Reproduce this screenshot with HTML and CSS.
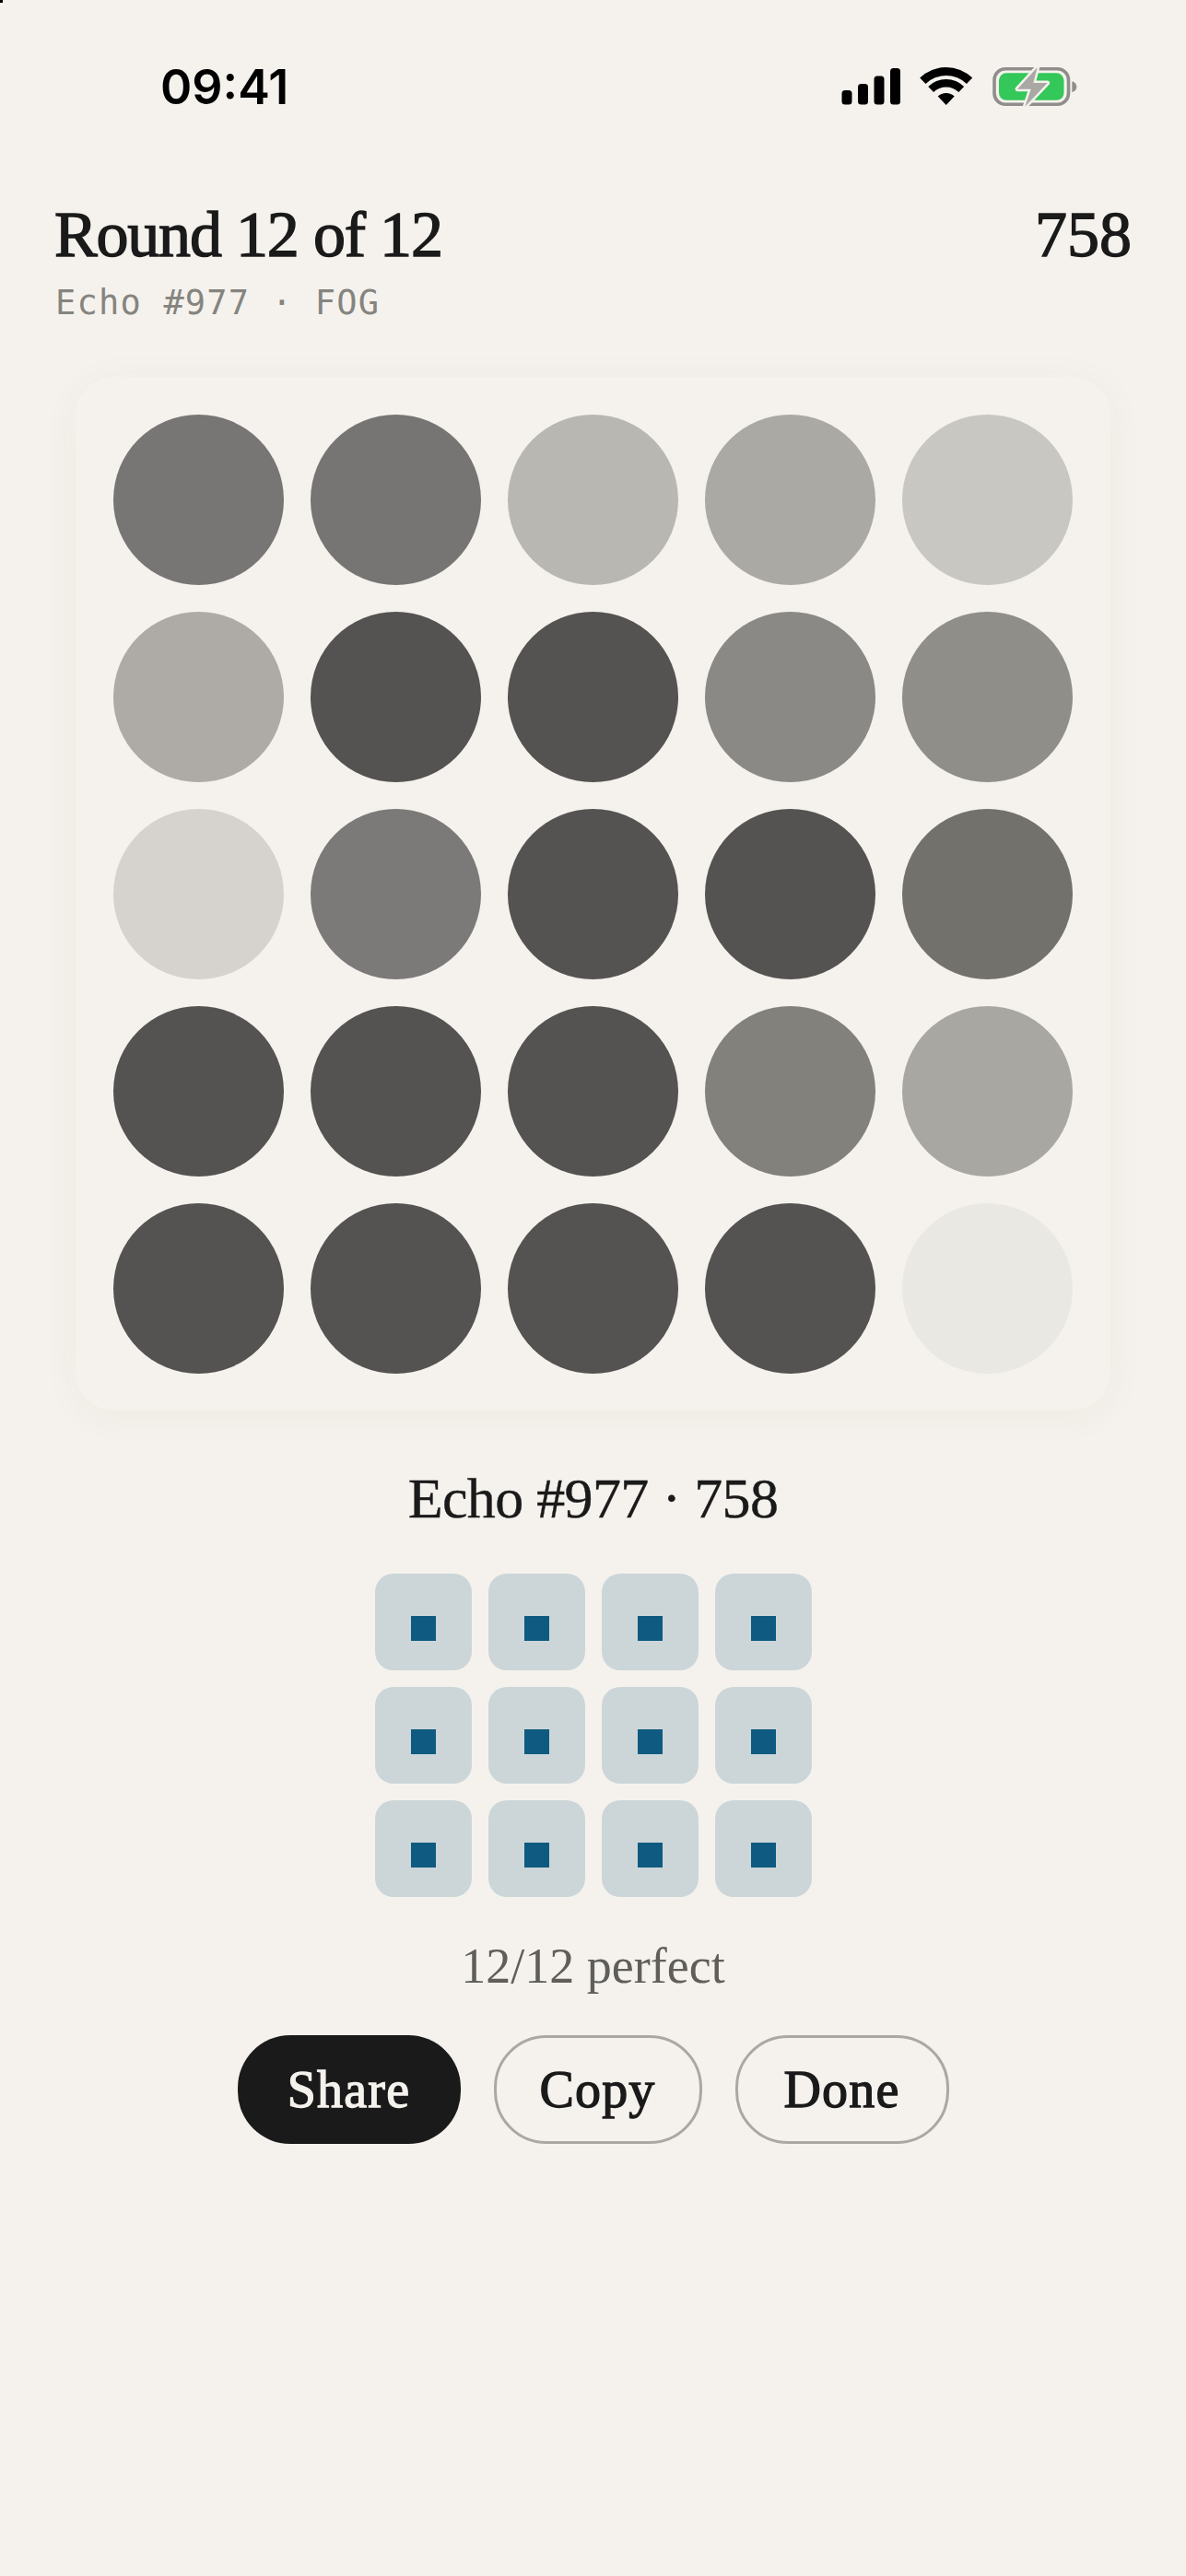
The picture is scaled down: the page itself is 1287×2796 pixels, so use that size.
FILE: index.html
```html
<!DOCTYPE html>
<html lang="en">
<head>
<meta charset="utf-8">
<title>Echo #977</title>
<link rel="stylesheet" href="styles.css">
</head>
<body>
<main class="screen">
  <span class="corner-mark"></span>
  <div class="status">
    <span class="time">09:41</span>
    <svg class="status-icons" viewBox="0 0 255 42" width="255" height="42" aria-hidden="true">
      <rect x="0.500" y="25" width="11" height="15.500" rx="3.500"/>
      <rect x="18" y="18" width="11" height="22.500" rx="3.500"/>
      <rect x="35.500" y="9.500" width="11" height="31" rx="3.500"/>
      <rect x="53" y="1" width="11" height="39.500" rx="3.500"/>
      <path d="M85.200 11.500A41 41 0 0 1 142.200 11.500L135.900 18A32 32 0 0 0 91.500 18Z"/>
      <path d="M94.200 20.900A28 28 0 0 1 133.200 20.900L127.300 27A19.500 19.500 0 0 0 100.100 27Z"/>
      <path d="M113.700 41L104.700 31.600A13 13 0 0 1 122.700 31.600Z"/>
      <rect class="bat-shell" x="166" y="1.800" width="80.500" height="38.500" rx="12"/>
      <rect class="bat-fill" x="171" y="6.300" width="70.500" height="29.500" rx="8"/>
      <path class="bat-nub" d="M250.300 15.300C253.500 16 255.300 18.500 255.300 21.200C255.300 24 253.500 26.300 250.300 27Z"/>
      <path class="bat-bolt" d="M212.700 0L191 23.700H205.700L199.300 42.700L223.700 17H208.300Z"/>
    </svg>
  </div>

  <header class="head">
    <div class="head-row">
      <h1 class="title">Round 12 of 12</h1>
      <span class="score">758</span>
    </div>
    <p class="sub">Echo #977 · FOG</p>
  </header>

  <section class="card">
    <span class="dot c77"></span><span class="dot c76"></span><span class="dot cb8"></span><span class="dot caa"></span><span class="dot cc8"></span>
    <span class="dot cae"></span><span class="dot c54"></span><span class="dot c54"></span><span class="dot c8a"></span><span class="dot c8f"></span>
    <span class="dot cd6"></span><span class="dot c7b"></span><span class="dot c54"></span><span class="dot c54"></span><span class="dot c72"></span>
    <span class="dot c54"></span><span class="dot c54"></span><span class="dot c54"></span><span class="dot c82"></span><span class="dot ca8"></span>
    <span class="dot c54"></span><span class="dot c54"></span><span class="dot c54"></span><span class="dot c54"></span><span class="dot cea"></span>
  </section>

  <h2 class="result">Echo #977 · 758</h2>

  <div class="tiles">
    <div class="tile"><i></i></div><div class="tile"><i></i></div><div class="tile"><i></i></div><div class="tile"><i></i></div>
    <div class="tile"><i></i></div><div class="tile"><i></i></div><div class="tile"><i></i></div><div class="tile"><i></i></div>
    <div class="tile"><i></i></div><div class="tile"><i></i></div><div class="tile"><i></i></div><div class="tile"><i></i></div>
  </div>

  <p class="perfect">12/12 perfect</p>

  <div class="actions">
    <button class="btn btn-dark">Share</button>
    <button class="btn btn-line btn-copy">Copy</button>
    <button class="btn btn-line btn-done">Done</button>
  </div>
</main>
</body>
</html>
```

FILE: styles.css
```css
* { box-sizing: border-box; }
html, body { margin: 0; padding: 0; }
body {
  background: #f5f2ed;
  color: #1a1a1a;
  font-family: "Liberation Serif", serif;
}
.screen { position: relative; width: 1287px; height: 2796px; overflow: hidden; }
.corner-mark { position: absolute; left: 0; top: 0; width: 3px; height: 3px; background: #000; }

.status {
  display: flex;
  justify-content: space-between;
  align-items: flex-start;
  height: 224px;
  padding: 65px 119px 0 174px;
}
.time {
  font-family: Inter, sans-serif;
  font-weight: 600;
  font-size: 52px;
  line-height: 60px;
  color: #000;
}
.status-icons { margin-top: 8px; fill: #000; overflow: visible; }
.bat-shell { fill: none; stroke: #8f8e8c; stroke-width: 3.6; }
.bat-fill { fill: #34c759; }
.bat-nub { fill: #8f8e8c; }
.bat-bolt { fill: #a9a8a5; stroke: #f5f2ed; stroke-width: 5; paint-order: stroke; stroke-linejoin: round; }

.head { padding: 0 59px; }
.head-row { display: flex; justify-content: space-between; align-items: baseline; }
.title, .score {
  margin: 0;
  font-family: "Liberation Serif", serif;
  font-weight: 400;
  font-size: 70px;
  line-height: 62px;
  color: #1a1a1a;
  -webkit-text-stroke: 1.4px #1a1a1a;
}
.title { letter-spacing: -1.2px; }
.sub {
  margin: 21px 0 0 1px;
  font-family: "DejaVu Sans Mono", monospace;
  font-size: 37px;
  line-height: 44px;
  letter-spacing: 1.2px;
  color: #85847f;
  white-space: pre;
}

.card {
  display: grid;
  grid-template-columns: repeat(5, 185px);
  gap: 29px;
  width: 1123px;
  height: 1122px;
  margin: 58px auto 0;
  padding: 41px;
  background: #f5f2ed;
  border-radius: 42px;
  box-shadow: 0 6px 44px rgba(70, 60, 30, 0.045);
}
.dot { width: 185px; height: 185px; border-radius: 50%; }
.c77 { background: #777674; }
.c76 { background: #767573; }
.cb8 { background: #b8b7b2; }
.caa { background: #aaa9a4; }
.cc8 { background: #c8c7c2; }
.cae { background: #aeaba7; }
.c54 { background: #545351; }
.c8a { background: #8a8985; }
.c8f { background: #8f8e89; }
.cd6 { background: #d6d3cf; }
.c7b { background: #7b7a78; }
.c72 { background: #72716c; }
.c82 { background: #82817c; }
.ca8 { background: #a8a7a2; }
.cea { background: #eae8e3; }

.result {
  margin: 59px 0 0;
  text-align: center;
  font-weight: 400;
  font-size: 62px;
  line-height: 72px;
  letter-spacing: -0.67px;
  color: #1a1a1a;
  -webkit-text-stroke: 0.4px #1a1a1a;
}

.tiles {
  display: grid;
  grid-template-columns: repeat(4, 105px);
  grid-auto-rows: 105px;
  gap: 18px;
  justify-content: center;
  margin-top: 46px;
}
.tile {
  display: flex;
  align-items: center;
  justify-content: center;
  padding-top: 14px;
  background: #ccd6d9;
  border-radius: 20px;
}
.tile i { display: block; width: 27px; height: 27px; background: #0f5a80; }

.perfect {
  margin: 45px 0 0;
  text-align: center;
  font-size: 54px;
  line-height: 60px;
  color: #5f5e5b;
}

.actions {
  display: flex;
  justify-content: center;
  gap: 36px;
  margin-top: 45px;
}
.btn {
  height: 118px;
  padding: 0;
  border-radius: 57px;
  font-family: "Liberation Serif", serif;
  font-weight: 400;
  font-size: 56px;
  letter-spacing: 1.2px;
  -webkit-text-stroke: 1.3px currentColor;
}
.btn-dark { width: 242px; background: #1a1a1a; color: #f5f2ed; border: none; }
.btn-line { background: transparent; color: #1a1a1a; border: 3px solid #aaa8a3; }
.btn-copy { width: 226px; }
.btn-done { width: 232px; }
```
